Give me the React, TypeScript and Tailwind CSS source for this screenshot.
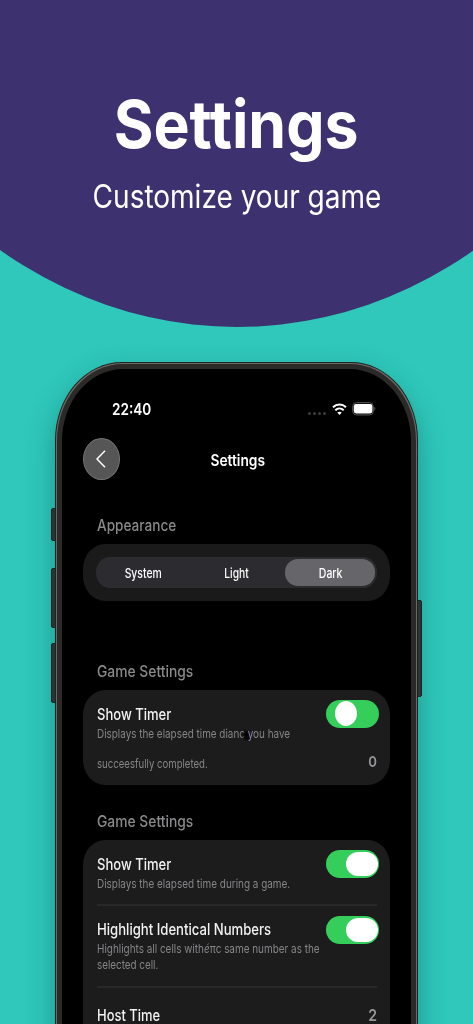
import type { ReactNode } from "react";

// Single line of condensed text; the caller passes the scale and the origin.
function Line({ className, children }: { className: string; children: ReactNode }) {
  return <span className={`block w-max whitespace-nowrap ${className}`}>{children}</span>;
}

function Toggle({ wide = false }: { wide?: boolean }) {
  return (
    <button
      type="button"
      role="switch"
      aria-checked="true"
      aria-label="Toggle"
      className={[
        "flex h-[27.5px] w-[52.5px] shrink-0 items-center rounded-full bg-[#35ce5b]",
        wide ? "justify-end pr-px" : "pl-[8.5px]",
      ].join(" ")}
    >
      <span
        className={
          wide
            ? "h-6 w-[31.5px] rounded-full bg-white"
            : "h-[25px] w-[22px] rounded-[50%] bg-white"
        }
      />
    </button>
  );
}

function StatusBar() {
  return (
    <div className="flex h-[18px] items-center justify-between pr-[35px] pl-[50px] text-white">
      <Line className="origin-left scale-x-[0.85] text-[16px] leading-[17px] font-semibold">22:40</Line>
      <div className="flex items-center">
        <div className="mt-[8px] mr-[6px] flex gap-[2px]">
          {[0, 1, 2, 3].map((dot) => (
            <span key={dot} className="size-[3px] rounded-full bg-[#3c3c3c]" />
          ))}
        </div>
        <svg width="15" height="12" viewBox="0 0 15 12" fill="none" stroke="white" strokeWidth="2.1">
          <path d="M1 4.2C4.7.6 10.3.6 14 4.2" />
          <path d="M3.3 7.2C5.7 5 9.3 5 11.7 7.2" />
          <path d="M5.2 9.6c1.3-1.3 3.3-1.3 4.6 0L7.5 11.9z" fill="white" stroke="none" />
        </svg>
        <svg className="ml-[5px]" width="24" height="14" viewBox="0 0 24 14">
          <rect x="0.7" y="0.7" width="20.6" height="12.2" rx="3.8" fill="none" stroke="#5c5c5c" />
          <rect x="1.8" y="2.1" width="18.6" height="9.4" rx="2.4" fill="white" />
          <path d="M22.3 4.8c1.4.5 1.4 3.5 0 4z" fill="#5c5c5c" />
        </svg>
      </div>
    </div>
  );
}

const sectionTitle = "origin-left text-[16px] leading-5 font-medium text-[#8a8a8c]";
const rowTitle = "origin-left text-[16px] leading-5 font-medium text-[#f2f2f2]";
const rowText = "origin-left text-[12px] leading-4 text-[#868688]";

export default function App() {
  return (
    <main className="relative flex h-[1024px] w-[473px] flex-col overflow-hidden bg-[#2fc8bb] font-['Inter','Liberation_Sans',sans-serif]">
      <div className="absolute top-[-709px] left-[-215px] h-[1036px] w-[904px] rounded-[50%] bg-[#3d326f]" />

      <header className="relative flex h-[362px] shrink-0 flex-col items-center pt-[84px] text-white">
        <h1>
          <Line className="scale-x-[0.92] text-[66px] leading-[80px] font-bold">Settings</Line>
        </h1>
        <p className="mt-[13px]">
          <Line className="scale-x-[0.875] text-[32px] leading-[40px]">Customize your game</Line>
        </p>
      </header>

      <div className="relative mx-auto w-[363px] shrink-0">
        {/* hardware buttons */}
        <i className="absolute top-[146px] -left-[4px] h-[33px] w-[6px] rounded-l-[2px] border border-[#17201f] bg-[#343233]" />
        <i className="absolute top-[206px] -left-[4px] h-[60px] w-[6px] rounded-l-[2px] border border-[#17201f] bg-[#343233]" />
        <i className="absolute top-[281px] -left-[4px] h-[60px] w-[6px] rounded-l-[2px] border border-[#17201f] bg-[#343233]" />
        <i className="absolute top-[238px] -right-[4px] h-[97px] w-[6px] rounded-r-[2px] border border-[#17201f] bg-[#343233]" />

        <div className="relative h-[760px] rounded-[67px/78px] border border-[#1c2423] bg-[#6b6865] p-px shadow-[0_12px_28px_0_rgba(0,70,65,0.4)]">
          <div className="h-full rounded-[66px/77px] bg-[#2b2a29] p-[5px]">
            <div className="h-full rounded-[61px/72px] bg-black pt-[31px]">
              <StatusBar />

              <div className="mt-[20px] grid h-[42px] grid-cols-[37px_1fr_37px] items-center px-[21px]">
                <button
                  type="button"
                  aria-label="Back"
                  className="flex h-[42px] w-[37px] items-center justify-center rounded-[50%] border border-[#747474] bg-[#565656] pr-[2px]"
                >
                  <svg width="10" height="18" viewBox="0 0 10 18" fill="none" stroke="white" strokeWidth="1.5">
                    <path d="M9 .8 1 9l8 8.2" />
                  </svg>
                </button>
                <h2 className="flex justify-center pt-[2px] pl-[2px]">
                  <Line className="scale-x-[0.86] text-[16px] leading-5 font-semibold text-white">Settings</Line>
                </h2>
              </div>

              <div className="px-[21px]">
                <h3 className="mt-[35px] pl-[14px]">
                  <Line className={`${sectionTitle} scale-x-[0.85]`}>Appearance</Line>
                </h3>
                <div className="mt-[9px] rounded-[22px/25px] bg-[#1a1a1b] px-[13px] pt-[13px] pb-[13px]">
                  <div className="grid h-[31px] grid-cols-3 items-center rounded-[14px/16px] bg-[#2c2c30] text-[13px] leading-4 font-medium text-white">
                    <div className="flex justify-center">
                      <Line className="scale-x-[0.8]">System</Line>
                    </div>
                    <div className="flex justify-center">
                      <Line className="scale-x-[0.79]">Light</Line>
                    </div>
                    <div className="mr-[1.5px] ml-[1.5px] flex h-[27px] items-center justify-center rounded-[13px] bg-[#66666a]">
                      <Line className="scale-x-[0.81]">Dark</Line>
                    </div>
                  </div>
                </div>

                <h3 className="mt-[60px] pl-[14px]">
                  <Line className={`${sectionTitle} scale-x-[0.865]`}>Game Settings</Line>
                </h3>
                <section className="mt-[9px] h-[95px] rounded-[22px/25px] bg-[#1c1c1d] pt-[10px] pr-[11.5px] pl-[14px]">
                  <div className="flex h-[52px] justify-between">
                    <div className="w-0 pt-[4px]">
                      <Line className={`${rowTitle} scale-x-[0.815]`}>Show Timer</Line>
                      <Line className={`${rowText} mt-[2px] scale-x-[0.825]`}>
                        Displays the elapsed time dianc{" "}
                        <span className="relative">
                          <span className="absolute top-[5px] -left-[5px] h-[9px] w-[6px] rounded-full bg-black blur-[1px]" />
                          <span className="relative text-[#8583ad]">y</span>
                        </span>
                        ou have
                      </Line>
                    </div>
                    <Toggle />
                  </div>
                  <div className="flex items-center justify-between pr-[2px]">
                    <Line className={`${rowText} mt-[4px] scale-x-[0.8]`}>succeesfully completed.</Line>
                    <Line className="origin-right scale-x-[0.88] text-[15px] leading-4 font-semibold text-[#98989c]">0</Line>
                  </div>
                </section>

                <h3 className="mt-[26px] pl-[14px]">
                  <Line className={`${sectionTitle} scale-x-[0.865]`}>Game Settings</Line>
                </h3>
                <section className="mt-[9px] h-[260px] rounded-[22px/25px] bg-[#1c1c1d] pt-[10px] pr-[11.5px] pl-[14px]">
                  <div className="flex h-[54px] justify-between">
                    <div className="w-0 pt-[4px]">
                      <Line className={`${rowTitle} scale-x-[0.815]`}>Show Timer</Line>
                      <Line className={`${rowText} mt-[2px] scale-x-[0.828]`}>
                        Displays the elapsed time during a game.
                      </Line>
                    </div>
                    <Toggle wide />
                  </div>
                  <div className="mr-[2px] flex h-[84px] justify-between border-y-2 border-[#28282a] pt-[10px]">
                    <div className="w-0 pt-[3px]">
                      <Line className={`${rowTitle} scale-x-[0.82]`}>Highlight Identical Numbers</Line>
                      <Line className={`${rowText} mt-[2px] scale-x-[0.828]`}>
                        Highlights all cells with<i>é</i>πc same number as the
                      </Line>
                      <Line className={`${rowText} scale-x-[0.82]`}>selected cell.</Line>
                    </div>
                    <div className="-mr-[2px]">
                      <Toggle wide />
                    </div>
                  </div>
                  <div className="flex justify-between pt-[17px] pr-[2px]">
                    <Line className={`${rowTitle} scale-x-[0.81]`}>Host Time</Line>
                    <Line className="origin-right scale-x-[0.88] text-[16px] leading-5 font-semibold text-[#98989c]">2</Line>
                  </div>
                </section>
              </div>
            </div>
          </div>
        </div>
      </div>
    </main>
  );
}
